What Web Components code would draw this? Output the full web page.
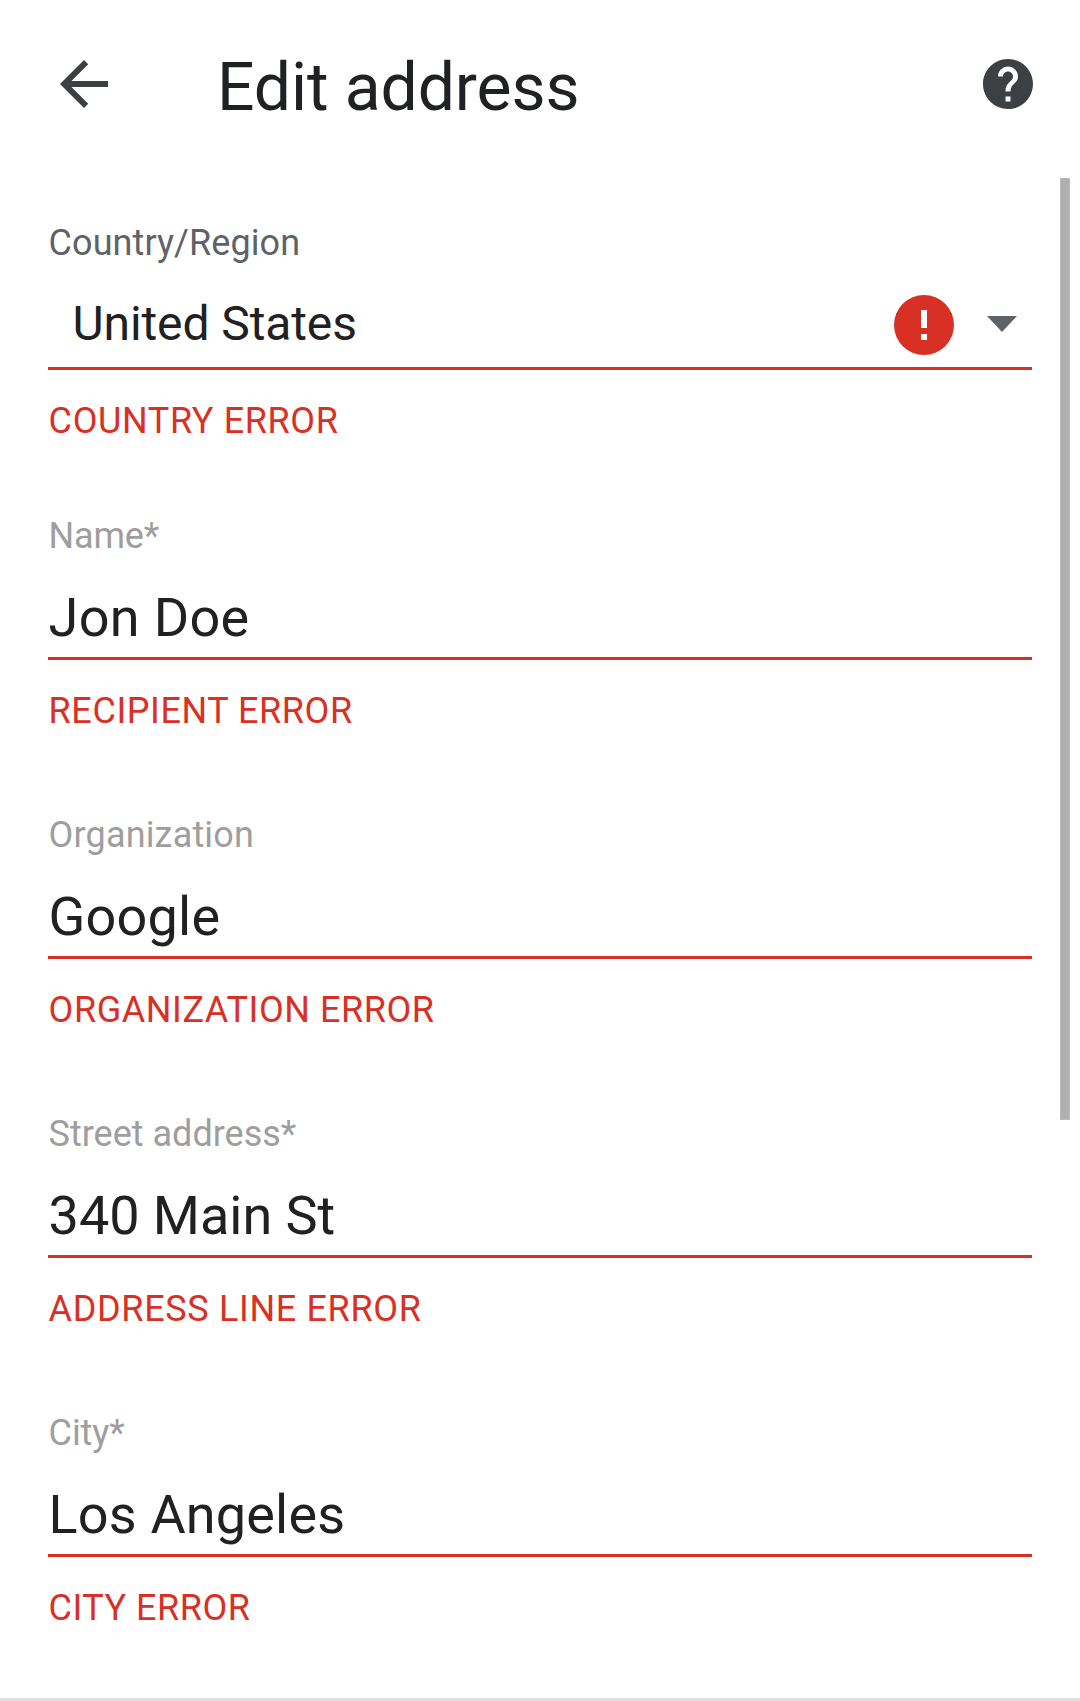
<!DOCTYPE html>
<html lang="en">
<head>
<meta charset="utf-8">
<title>Edit address</title>
<style>
  html, body { margin: 0; background: #fff; }
  body { font-family: Roboto, "Liberation Sans", sans-serif; }
</style>
</head>
<body>
<address-editor></address-editor>

<template id="editor-template">
  <style>
    :host { display: flex; flex-direction: column; box-sizing: border-box; width: 1080px; height: 1701px; border-bottom: 3px solid #e0e0e0; overflow: hidden; background: #fff; }
    main { flex: 1; min-height: 0; display: flex; }
    form { flex: 1; display: flex; flex-direction: column; gap: 82px; padding: 44px 28px 0 48px; }
    country-field { margin-bottom: -9px; }
  </style>
  <editor-toolbar>Edit address</editor-toolbar>
  <main>
    <form>
      <country-field>
        <span slot="label" style="letter-spacing:.07px">Country/Region</span>
        <span slot="value" style="letter-spacing:-.1px">United States</span>
        <span slot="error" style="letter-spacing:.62px">COUNTRY ERROR</span>
      </country-field>
      <text-field>
        <span slot="label" style="letter-spacing:-.2px">Name*</span>
        <span slot="value" style="letter-spacing:.32px">Jon Doe</span>
        <span slot="error" style="letter-spacing:.57px">RECIPIENT ERROR</span>
      </text-field>
      <text-field>
        <span slot="label" style="letter-spacing:.16px">Organization</span>
        <span slot="value" style="letter-spacing:.2px">Google</span>
        <span slot="error" style="letter-spacing:.56px">ORGANIZATION ERROR</span>
      </text-field>
      <text-field>
        <span slot="label">Street address*</span>
        <span slot="value" style="letter-spacing:-.04px">340 Main St</span>
        <span slot="error" style="letter-spacing:.66px">ADDRESS LINE ERROR</span>
      </text-field>
      <text-field>
        <span slot="label" style="letter-spacing:-.1px">City*</span>
        <span slot="value" style="letter-spacing:.17px">Los Angeles</span>
        <span slot="error" style="letter-spacing:.5px">CITY ERROR</span>
      </text-field>
    </form>
    <scroll-thumb></scroll-thumb>
  </main>
</template>

<template id="toolbar-template">
  <style>
    :host { display: flex; align-items: flex-start; box-sizing: border-box; height: 178px; padding: 48px 42px 0 48px; flex: none; }
    svg { display: block; flex: none; }
    h1 { flex: 1; margin: 1px 0 0 97px; font: 400 66px/77px Roboto, sans-serif; letter-spacing: -.08px; color: #202124; white-space: nowrap; }
    .help { margin-top: 6px; }
  </style>
  <svg width="72" height="72" viewBox="0 0 24 24" fill="#3c4043"><path d="M20 11H7.83l5.59-5.59L12 4l-8 8 8 8 1.41-1.41L7.83 13H20v-2z"/></svg>
  <h1><slot></slot></h1>
  <svg class="help" width="60" height="60" viewBox="0 0 24 24" fill="#3c4043"><path d="M12 2C6.48 2 2 6.48 2 12s4.48 10 10 10 10-4.48 10-10S17.520 2 12 2zm1 17h-2v-2h2v2zm2.070-7.750l-.9.920C13.450 12.900 13 13.500 13 15h-2v-.5c0-1.100.450-2.100 1.170-2.830l1.240-1.260c.370-.360.590-.860.590-1.410 0-1.100-.9-2-2-2s-2 .9-2 2H8c0-2.210 1.790-4 4-4s4 1.790 4 4c0 .880-.360 1.680-.930 2.250z"/></svg>
</template>

<template id="text-template">
  <style>
    :host { display: flex; flex-direction: column; }
    .label, .error { font-size: 36px; line-height: 42px; height: 42px; padding-left: .6px; white-space: nowrap; }
    .label { color: #9e9e9e; }
    .error { color: #d93025; margin-top: 30px; }
    .value { margin-top: 29px; height: 63px; padding: 0 0 8px .6px; border-bottom: 3px solid #d93025; font-size: 54px; line-height: 63px; color: #212121; white-space: nowrap; }
  </style>
  <div class="label"><slot name="label"></slot></div>
  <div class="value"><slot name="value"></slot></div>
  <div class="error"><slot name="error"></slot></div>
</template>

<template id="country-template">
  <style>
    :host { display: flex; flex-direction: column; }
    .label, .error { font-size: 36px; line-height: 42px; height: 42px; padding-left: .6px; white-space: nowrap; }
    .label { color: #5f6368; }
    .error { color: #d93025; margin-top: 30px; }
    .row { display: flex; align-items: flex-start; height: 72px; padding: 31px 15px 0 24.5px; border-bottom: 3px solid #d93025; }
    .value { flex: 1; font-size: 48px; line-height: 57px; color: #212121; white-space: nowrap; }
    svg { display: block; flex: none; }
    .arrow { margin: 21px 0 0 33px; }
  </style>
  <div class="label"><slot name="label"></slot></div>
  <div class="row">
    <div class="value"><slot name="value"></slot></div>
    <svg width="60" height="60" viewBox="0 0 60 60"><circle cx="30" cy="30" r="30" fill="#d93025"/><path fill="#fff" d="M27 15h6v18h-6zM27 39h6v6h-6z"/></svg>
    <svg class="arrow" width="30" height="16" viewBox="0 0 30 16"><path fill="#5f6368" d="M0 0h30L15 16z"/></svg>
  </div>
  <div class="error"><slot name="error"></slot></div>
</template>

<template id="thumb-template">
  <style>
    :host { display: block; box-sizing: border-box; flex: none; width: 10px; height: 942px; margin-right: 10px; background: #b0b0b0; border: 1px solid #b9b9b9; }
  </style>
</template>

<script>
  const define = (name, templateId) => customElements.define(name, class extends HTMLElement {
    constructor() {
      super();
      this.attachShadow({ mode: 'open' })
        .append(document.getElementById(templateId).content.cloneNode(true));
    }
  });
  define('editor-toolbar', 'toolbar-template');
  define('text-field', 'text-template');
  define('country-field', 'country-template');
  define('scroll-thumb', 'thumb-template');
  define('address-editor', 'editor-template');
</script>
</body>
</html>
